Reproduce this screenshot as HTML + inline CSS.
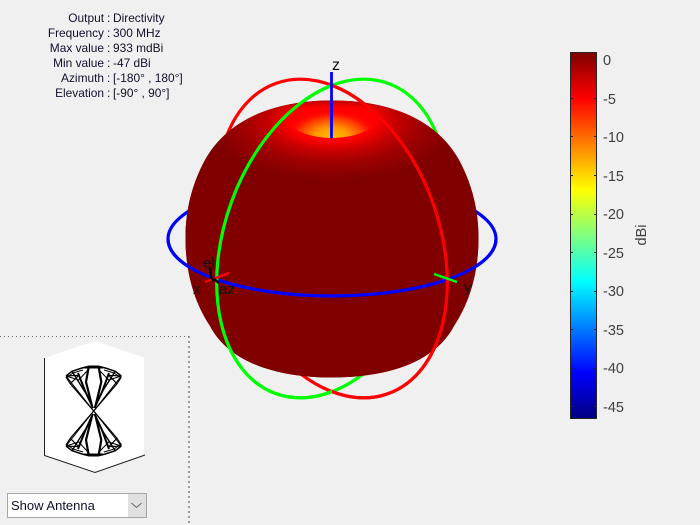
<!DOCTYPE html>
<html><head><meta charset="utf-8"><style>
html,body{margin:0;padding:0;width:700px;height:525px;overflow:hidden;background:#f0f0f0}
svg{position:absolute;left:0;top:0}
.m{font:11.9px "Liberation Sans",sans-serif;fill:#10102a}
.c{font:14.5px "Liberation Sans",sans-serif;fill:#404040}
.a{font:15px "Liberation Sans",sans-serif;fill:#111}
#sel{position:absolute;left:7px;top:493px;width:138px;height:23px;border:1px solid #a6a6a6;background:#fff;font:13px/23px "Liberation Sans",sans-serif;color:#10102a;text-indent:3px}
#sel i{position:absolute;right:0;top:0;width:18px;height:23px;background:#e1e1e1}
</style></head><body>
<svg width="700" height="525" viewBox="0 0 700 525">
<defs>
<linearGradient id="cb" x1="0" y1="0" x2="0" y2="1">
<stop offset="0" stop-color="#800000"/><stop offset=".125" stop-color="#f00"/><stop offset=".375" stop-color="#ff0"/><stop offset=".625" stop-color="#0ff"/><stop offset=".875" stop-color="#00f"/><stop offset="1" stop-color="#000080"/>
</linearGradient>
<linearGradient id="base" gradientUnits="userSpaceOnUse" x1="0" y1="100" x2="0" y2="378">
<stop offset="0" stop-color="#800000"/><stop offset=".42" stop-color="#800000"/><stop offset=".62" stop-color="#8a0000"/><stop offset=".8" stop-color="#8a0000"/><stop offset="1" stop-color="#800000"/>
</linearGradient>
<radialGradient id="glow" gradientUnits="userSpaceOnUse" cx="0" cy="0" r="1" gradientTransform="translate(332 122) scale(125 58)">
<stop offset="0" stop-color="#f00"/><stop offset=".33" stop-color="#f00"/><stop offset=".5" stop-color="#c80000"/><stop offset=".7" stop-color="#a00000"/><stop offset="1" stop-color="#800000"/>
</radialGradient>
<linearGradient id="rim" gradientUnits="userSpaceOnUse" x1="0" y1="100" x2="0" y2="108">
<stop offset="0" stop-color="#900000" stop-opacity=".6"/><stop offset="1" stop-color="#900000" stop-opacity="0"/>
</linearGradient>
<radialGradient id="hole" gradientUnits="userSpaceOnUse" cx="0" cy="0" r="1" gradientTransform="translate(332 137) scale(47 27)">
<stop offset="0" stop-color="#ffc000"/><stop offset=".35" stop-color="#ff9a00"/><stop offset=".7" stop-color="#ff3c00"/><stop offset="1" stop-color="#f00" stop-opacity="0"/>
</radialGradient>
<clipPath id="hc"><path d="M270,90H394V116H378A46,22 0 0 1 286,116H270Z"/></clipPath>
<clipPath id="bc"><path d="M332,100.500C270,100.500 226,122 205,160C192,184 185.500,210 185.500,238C185.500,270 193,300 210,326C230,364 280,377.500 332,377.500C384,377.500 434,364 454,326C471,300 478.500,270 478.500,238C478.500,210 472,184 459,160C438,122 394,100.500 332,100.500Z"/></clipPath>
<clipPath id="cr"><rect x="332" y="0" width="368" height="525"/></clipPath>
<clipPath id="cl"><rect x="0" y="0" width="332" height="525"/></clipPath>
<clipPath id="cb2"><rect x="0" y="239" width="700" height="100"/></clipPath>
<path id="body" d="M332,100.500C270,100.500 226,122 205,160C192,184 185.500,210 185.500,238C185.500,270 193,300 210,326C230,364 280,377.500 332,377.500C384,377.500 434,364 454,326C471,300 478.500,270 478.500,238C478.500,210 472,184 459,160C438,122 394,100.500 332,100.500Z"/>
<g id="ant" fill="none" stroke="#000" stroke-linejoin="round">
<path d="M66,376L72,371.300L82,368L88.700,366.300H98.700L105.300,368L115.300,371.300L121.300,376" stroke-width="1.500"/>
<path d="M66,378L73,373L83,370M121.300,378L114,373L104,370" stroke-width="1"/>
<path d="M66,377L70.300,383.700L93.700,411L117,383.700L121.300,377" stroke-width="1.200"/>
<path d="M66,376L93.700,411L121.300,376" stroke-width="1"/>
<path d="M70.300,383.700L78.700,375.300L66,376M117,383.700L108.700,375.300L121.300,376" stroke-width="1.200"/>
<path d="M72,371.300L85,392M115.300,371.300L102,392" stroke-width="1.400"/>
<path d="M78,373L85.500,392L93,408M109,373L102,392L94.500,408" stroke-width="2"/>
<path d="M88.700,367L86,382L92,406M98.700,367L101.300,382L95.500,406" stroke-width="2.200"/>
<path d="M84,367.500H103" stroke-width="2"/>
<path d="M66,376L78.700,380L88,370M121.300,376L108.700,380L99,370" stroke-width="1"/>
</g>
</defs>
<text class="m" text-anchor="end" x="104" y="22">Output</text><text class="m" x="107" y="22">:</text><text class="m" x="113" y="22">Directivity</text>
<text class="m" text-anchor="end" x="104" y="37">Frequency</text><text class="m" x="107" y="37">:</text><text class="m" x="113" y="37">300 MHz</text>
<text class="m" text-anchor="end" x="104" y="52">Max value</text><text class="m" x="107" y="52">:</text><text class="m" x="113" y="52">933 mdBi</text>
<text class="m" text-anchor="end" x="104" y="67">Min value</text><text class="m" x="107" y="67">:</text><text class="m" x="113" y="67">-47 dBi</text>
<text class="m" text-anchor="end" x="104" y="82">Azimuth</text><text class="m" x="107" y="82">:</text><text class="m" x="113" y="82">[-180° , 180°]</text>
<text class="m" text-anchor="end" x="104" y="97">Elevation</text><text class="m" x="107" y="97">:</text><text class="m" x="113" y="97">[-90° , 90°]</text>

<g fill="none" stroke-width="3.200">
<ellipse cx="332" cy="238.500" rx="107" ry="165" transform="rotate(-20 332 238.500)" stroke="#f00"/>
<ellipse cx="332" cy="238.500" rx="107" ry="165" transform="rotate(20 332 238.500)" stroke="#0f0"/>
<ellipse cx="332" cy="239" rx="164" ry="57" stroke="#00f"/>
</g>
<use href="#body" fill="url(#base)"/>
<use href="#body" fill="url(#glow)"/>
<g clip-path="url(#hc)"><rect x="270" y="90" width="124" height="60" fill="url(#hole)"/></g>
<g clip-path="url(#bc)"><rect x="270" y="98" width="124" height="12" fill="url(#rim)"/></g>
<g fill="none" stroke-width="3.200">
<g clip-path="url(#cb2)"><ellipse cx="332" cy="239" rx="164" ry="57" stroke="#00f"/></g>
<g clip-path="url(#cr)"><ellipse cx="332" cy="238.500" rx="107" ry="165" transform="rotate(-20 332 238.500)" stroke="#f00"/></g>
<g clip-path="url(#cl)"><ellipse cx="332" cy="238.500" rx="107" ry="165" transform="rotate(20 332 238.500)" stroke="#0f0"/></g>
</g>
<path d="M331.500,72V138" stroke="#00f" stroke-width="2.800"/>
<path d="M205,282L229,273" stroke="#f00" stroke-width="2.500"/>
<path d="M434,274L457,282" stroke="#0f0" stroke-width="2.500"/>
<path d="M214,279L219,283" stroke="#000" stroke-width="2.500"/>
<path d="M210,268L211,277L214,281" stroke="#000" stroke-width="2.500" fill="none"/>
<text class="a" x="203" y="268">el</text>
<text class="a" x="193" y="294">x</text>
<text class="a" x="219" y="294">az</text>
<text class="a" x="464" y="292">y</text>
<text class="a" x="332" y="70" style="font-size:16px">z</text>

<rect x="570.500" y="52.500" width="26" height="366" fill="url(#cb)" stroke="#262626"/>
<path d="M570,59.500h3M594,59.500h3M570,98.500h3M594,98.500h3M570,136.500h3M594,136.500h3M570,175.500h3M594,175.500h3M570,214.500h3M594,214.500h3M570,252.500h3M594,252.500h3M570,291.500h3M594,291.500h3M570,329.500h3M594,329.500h3M570,368.500h3M594,368.500h3M570,406.500h3M594,406.500h3" stroke="#262626"/>
<text class="c" x="603" y="65">0</text><text class="c" x="603" y="104">-5</text><text class="c" x="603" y="142">-10</text><text class="c" x="603" y="181">-15</text><text class="c" x="603" y="219">-20</text><text class="c" x="603" y="258">-25</text><text class="c" x="603" y="296">-30</text><text class="c" x="603" y="335">-35</text><text class="c" x="603" y="373">-40</text><text class="c" x="603" y="412">-45</text>
<text class="c" transform="translate(646 235) rotate(-90)" text-anchor="middle">dBi</text>

<path d="M0,336.500H189" fill="none" stroke="#6e6e6e" stroke-dasharray="1 3"/>
<path d="M189,336V525" fill="none" stroke="#808080" stroke-width="1.500" stroke-dasharray="2 3"/>
<path d="M95,341L144,357.500V455L95,472L44.500,455V358Z" fill="#fff"/>
<path d="M44.500,358V455.500L95,472.500L145,455" fill="none" stroke="#222" stroke-width="1"/>
<use href="#ant"/>
<use href="#ant" transform="translate(0 822) scale(1 -1)"/>
</svg>
<div id="sel">Show Antenna<i><svg width="18" height="23" viewBox="0 0 18 23" style="position:absolute;left:0;top:0"><path d="M3.500,9l5,4.500l5,-4.500" fill="none" stroke="#666" stroke-width="1"/></svg></i></div>
</body></html>
